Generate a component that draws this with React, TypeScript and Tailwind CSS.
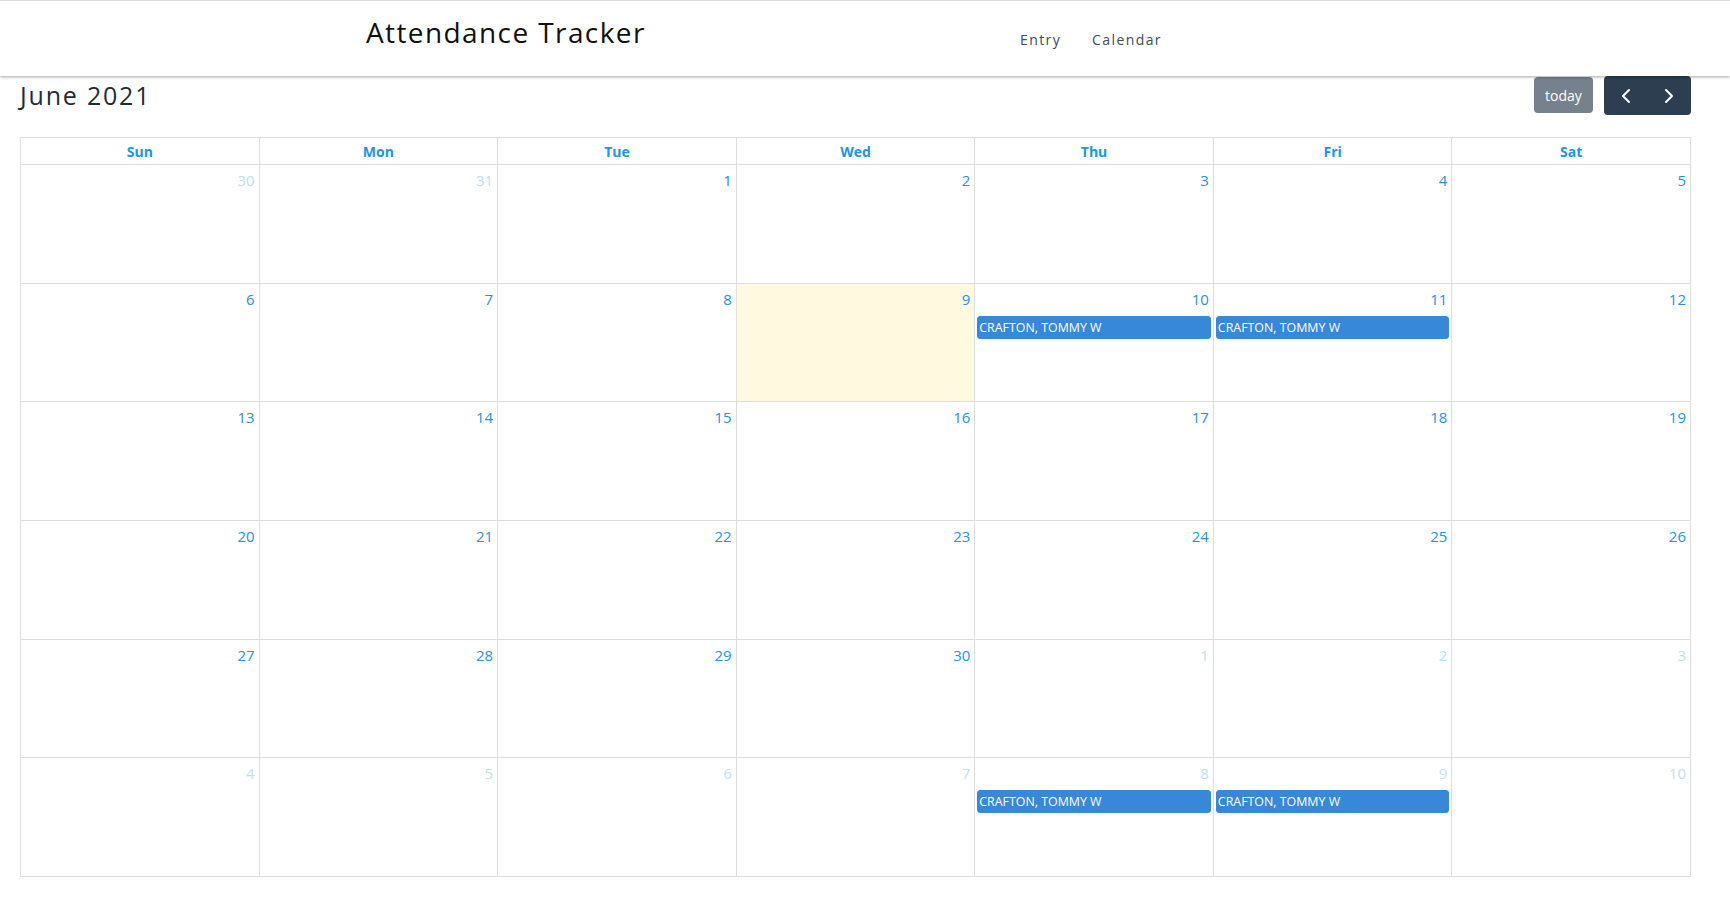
import React from "react";
import { ChevronLeft, ChevronRight } from "lucide-react";

interface Day {
  date: number;
  inMonth: boolean;
  isToday: boolean;
  events: string[];
}

const DAY_NAMES = ["Sun", "Mon", "Tue", "Wed", "Thu", "Fri", "Sat"];

// month is 0-based, key = "month-date"
const EVENTS: Record<string, string[]> = {
  "5-10": ["CRAFTON, TOMMY W"],
  "5-11": ["CRAFTON, TOMMY W"],
  "6-8": ["CRAFTON, TOMMY W"],
  "6-9": ["CRAFTON, TOMMY W"],
};

const buildWeeks = (): Day[][] => {
  const weeks: Day[][] = [];
  const cursor = new Date(2021, 4, 30);
  for (let w = 0; w < 6; w++) {
    const week: Day[] = [];
    for (let d = 0; d < 7; d++) {
      const m = cursor.getMonth();
      const date = cursor.getDate();
      week.push({
        date,
        inMonth: m === 5,
        isToday: m === 5 && date === 9,
        events: EVENTS[`${m}-${date}`] || [],
      });
      cursor.setDate(date + 1);
    }
    weeks.push(week);
  }
  return weeks;
};

const App: React.FC = () => {
  const weeks = buildWeeks();

  return (
    <div className="min-h-screen bg-white font-['Open_Sans',sans-serif]">
      {/* Top bar */}
      <header className="relative z-10 flex h-[76px] items-start border-t border-[#dddddd] bg-white shadow-[0_1px_3px_rgba(0,0,0,0.35)]">
        <div className="w-[1020px] pl-[366px]">
          <h1 className="mt-[14px] text-[28px] leading-[34px] tracking-[1.4px] text-[#111111]">
            Attendance Tracker
          </h1>
        </div>
        <nav className="mt-[29px] flex gap-[31px] text-[14px] leading-[20px] tracking-[1.4px] text-[#3d4a59]">
          <a href="#">Entry</a>
          <a href="#">Calendar</a>
        </nav>
      </header>

      {/* Toolbar */}
      <div className="flex h-[61px] items-start justify-between pl-[20px] pr-[39px]">
        <h2 className="mt-[4px] text-[25px] leading-[30px] tracking-[1.8px] text-[#1d2b3a]">
          June 2021
        </h2>
        <div className="flex items-start gap-[11px]">
          <button className="mt-[1px] h-[36px] w-[59px] rounded-[4px] bg-[#2c3e50] text-[14px] text-white opacity-65">
            today
          </button>
          <div className="flex h-[39px] w-[87px] overflow-hidden rounded-[4px] bg-[#2c3e50]">
            <button className="flex w-1/2 items-center justify-center text-white">
              <ChevronLeft size={24} strokeWidth={2} />
            </button>
            <button className="flex w-1/2 items-center justify-center text-white">
              <ChevronRight size={24} strokeWidth={2} />
            </button>
          </div>
        </div>
      </div>

      {/* Month grid */}
      <div className="ml-[20px] mr-[39px] border-l border-t border-[#dddddd]">
        <div className="grid grid-cols-7">
          {DAY_NAMES.map((name) => (
            <div
              key={name}
              className="h-[27px] border-b border-r border-[#dddddd] pt-[1px] text-center text-[14px] font-bold leading-[26px] text-[#1996e6]"
            >
              {name}
            </div>
          ))}
        </div>
        {weeks.map((week, wi) => (
          <div key={wi} className="grid h-[118.67px] grid-cols-7">
            {week.map((day, di) => (
              <div
                key={di}
                className={`border-b border-r border-[#dddddd] ${
                  day.isToday ? "bg-[#fffadf]" : "bg-white"
                }`}
              >
                <div
                  className={`pr-[4px] pt-[5px] text-right text-[15px] leading-[21px] text-[#2a90dc] ${
                    day.inMonth ? "" : "opacity-30"
                  }`}
                >
                  {day.date}
                </div>
                {day.events.map((ev, ei) => (
                  <div
                    key={ei}
                    className="mx-[2px] mt-[6px] h-[23px] truncate rounded-[3px] border border-[#3788d8] bg-[#3788d8] pl-[1px] text-[12.4px] leading-[21px] text-white"
                  >
                    {ev}
                  </div>
                ))}
              </div>
            ))}
          </div>
        ))}
      </div>
    </div>
  );
};

export default App;
